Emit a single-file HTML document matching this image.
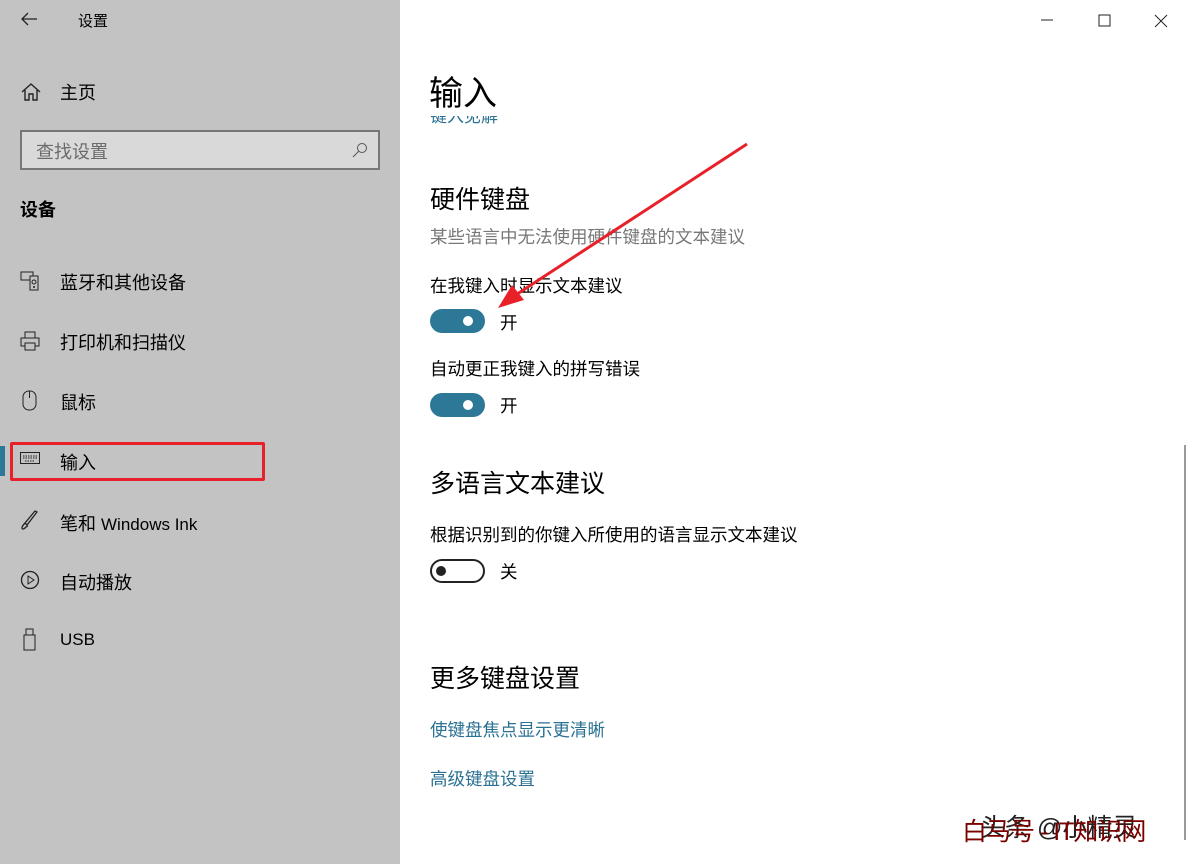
<!DOCTYPE html>
<html><head><meta charset="utf-8"><style>
*{margin:0;padding:0;box-sizing:border-box}
body{width:1190px;height:864px;overflow:hidden;font-family:"Liberation Sans","Noto Sans CJK SC",sans-serif;background:#fff;position:relative;color:#000}
.side{position:absolute;left:0;top:0;width:400px;height:864px;background:#c3c3c3}
.t{position:absolute;white-space:nowrap}
.ic{position:absolute}
.sw{position:absolute;width:55px;height:24px;border-radius:12px;background:#2d7896}
.sw::after{content:"";position:absolute;right:12px;top:7px;width:10px;height:10px;border-radius:50%;background:#fff}
.off{background:#fff;border:2px solid #222}
.off::after{left:4px;right:auto;top:5px;background:#222}
.link{color:#2a7193}
</style></head><body>
<div class="side">
<svg class="ic" style="left:20px;top:12px" width="18" height="14"><path d="M8 1L2 7L8 13M2 7H17" stroke="#222" stroke-width="1.3" fill="none"/></svg>
<div class="t" style="left:78px;top:10px;font-size:15px">设置</div>
<svg class="ic" style="left:21px;top:83px" width="20" height="18"><path d="M1 9L10 1L19 9M4 7V17H8V11H12V17H16V7" stroke="#222" stroke-width="1.4" fill="none"/></svg>
<div class="t" style="left:60px;top:79px;font-size:18px">主页</div>
<div class="t" style="left:20px;top:130px;width:360px;height:40px;border:2px solid #777;background:#d9d9d9"></div>
<div class="t" style="left:36px;top:138px;font-size:18px;color:#6b6b6b">查找设置</div>
<svg class="ic" style="left:352px;top:142px" width="16" height="16"><circle cx="10" cy="6" r="4.5" stroke="#555" fill="none"/><path d="M7 9L1 15" stroke="#555"/></svg>
<div class="t" style="left:20px;top:196px;font-size:18px;font-weight:bold">设备</div>
<svg class="ic" style="left:20px;top:271px" width="20" height="20"><rect x="1" y="1" width="12" height="8" stroke="#222" fill="none"/><rect x="10" y="5" width="8" height="14" stroke="#222" fill="#c3c3c3"/><circle cx="14" cy="11" r="2" stroke="#222" fill="none"/><circle cx="14" cy="16" r="1" fill="#222"/></svg>
<div class="t" style="left:60px;top:269px;font-size:18px">蓝牙和其他设备</div>
<svg class="ic" style="left:20px;top:331px" width="20" height="20"><rect x="5" y="1" width="10" height="6" stroke="#222" fill="none"/><rect x="1" y="7" width="18" height="8" stroke="#222" fill="none"/><rect x="5" y="12" width="10" height="7" stroke="#222" fill="#c3c3c3"/></svg>
<div class="t" style="left:60px;top:329px;font-size:18px">打印机和扫描仪</div>
<svg class="ic" style="left:22px;top:390px" width="16" height="22"><rect x="1" y="1" width="13" height="19" rx="6" stroke="#222" fill="none"/><path d="M7.5 1V8" stroke="#222"/></svg>
<div class="t" style="left:60px;top:389px;font-size:18px">鼠标</div>
<div class="t" style="left:0;top:446px;width:5px;height:30px;background:#2d7896"></div>
<div class="t" style="left:10px;top:442px;width:255px;height:39px;border:3px solid #e8202a;border-radius:2px"></div>
<svg class="ic" style="left:20px;top:452px" width="20" height="12"><rect x="0.5" y="0.5" width="19" height="11" stroke="#222" fill="none"/><path d="M3 4H17M3 6H17M5 9H15" stroke="#222" stroke-dasharray="1.5 1"/></svg>
<div class="t" style="left:60px;top:449px;font-size:18px">输入</div>
<svg class="ic" style="left:20px;top:510px" width="20" height="22"><path d="M17 2L7 15L5 13L15 1ZM5 13C2 16 1 19 3 19C5 19 6 16 8 16" stroke="#222" fill="none" stroke-width="1.3"/></svg>
<div class="t" style="left:60px;top:510px;font-size:18px">笔和 <span style="font-size:17px">Windows Ink</span></div>
<svg class="ic" style="left:20px;top:570px" width="20" height="22"><circle cx="10" cy="10" r="8.5" stroke="#222" fill="none" stroke-width="1.3"/><path d="M8 6V14L14 10Z" stroke="#222" fill="none"/></svg>
<div class="t" style="left:60px;top:569px;font-size:18px">自动播放</div>
<svg class="ic" style="left:23px;top:628px" width="14" height="24"><rect x="3" y="1" width="7" height="6" stroke="#222" fill="none"/><rect x="1" y="7" width="11" height="15" stroke="#222" fill="none"/></svg>
<div class="t" style="left:60px;top:630px;font-size:17px">USB</div>
</div>
<svg class="ic" style="left:1040px;top:13px" width="140" height="16"><path d="M1 7H13" stroke="#222"/><rect x="59" y="2" width="11" height="11" stroke="#222" fill="none"/><path d="M115 2L127 14M127 2L115 14" stroke="#222"/></svg>
<div class="t" style="left:429px;top:66px;font-size:34px">输入</div>
<div class="t link" style="left:430px;top:116px;font-size:17px;height:14px;overflow:hidden;line-height:16px"><span style="position:relative;top:-7px">键入见解</span></div>
<div class="t" style="left:430px;top:180px;font-size:25px">硬件键盘</div>
<div class="t" style="left:430px;top:224px;font-size:17.5px;color:#777">某些语言中无法使用硬件键盘的文本建议</div>
<div class="t" style="left:430px;top:273px;font-size:17.5px">在我键入时显示文本建议</div>
<div class="sw" style="left:430px;top:309px"></div>
<div class="t" style="left:500px;top:310px;font-size:17.5px">开</div>
<div class="t" style="left:430px;top:356px;font-size:17.5px">自动更正我键入的拼写错误</div>
<div class="sw" style="left:430px;top:393px"></div>
<div class="t" style="left:500px;top:393px;font-size:17.5px">开</div>
<div class="t" style="left:430px;top:464px;font-size:25px">多语言文本建议</div>
<div class="t" style="left:430px;top:522px;font-size:17.5px">根据识别到的你键入所使用的语言显示文本建议</div>
<div class="sw off" style="left:430px;top:559px"></div>
<div class="t" style="left:500px;top:559px;font-size:17.5px">关</div>
<div class="t" style="left:430px;top:659px;font-size:25px">更多键盘设置</div>
<div class="t link" style="left:430px;top:717px;font-size:17.5px">使键盘焦点显示更清晰</div>
<div class="t link" style="left:430px;top:766px;font-size:17.5px">高级键盘设置</div>
<div class="t" style="left:1184px;top:445px;width:2px;height:395px;background:#999"></div>
<svg class="ic" style="left:490px;top:140px" width="265" height="175"><path d="M257 4L18 160" stroke="#e8202a" stroke-width="3"/><path d="M8 168L22 145L34 160Z" fill="#e8202a"/></svg>
<div class="t" style="left:980px;top:808px;font-size:25px;color:#222">头条 @小精灵</div>
<div class="t" style="left:962px;top:812px;font-size:25px;color:#7a0000;letter-spacing:-1px">白马号 - IT知识网</div>
</body></html>
